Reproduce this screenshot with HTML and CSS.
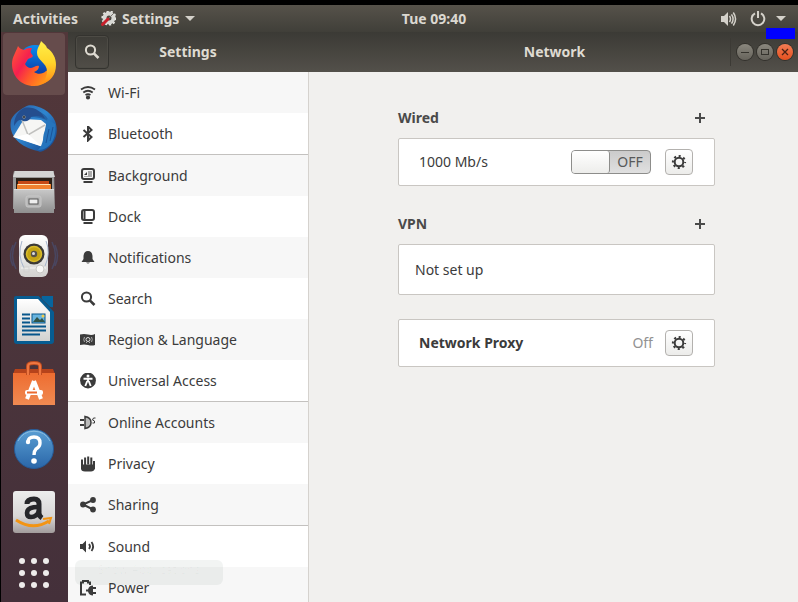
FILE: index.html
```html
<!DOCTYPE html>
<html lang="en">
<head>
<meta charset="utf-8">
<title>Settings</title>
<link rel="stylesheet" href="styles.css">
</head>
<body>
<svg class="defs" aria-hidden="true">
  <defs>
    <linearGradient id="fox" x1="0" y1="0.2" x2="1" y2="0.8"><stop offset="0" stop-color="#ff4f3a"/><stop offset=".3" stop-color="#f5204f"/><stop offset=".55" stop-color="#ff5a2a"/><stop offset="1" stop-color="#ffb010"/></linearGradient>
    <linearGradient id="flame" x1="0" y1="0" x2="0" y2="1"><stop offset="0" stop-color="#fff04a"/><stop offset=".5" stop-color="#ffd42a"/><stop offset="1" stop-color="#ff8a16"/></linearGradient>
    <linearGradient id="globe" x1="0" y1="0" x2="0" y2="1"><stop offset="0" stop-color="#0a8cf0"/><stop offset="1" stop-color="#0a2f98"/></linearGradient>
    <linearGradient id="bird" x1="0" y1="0" x2="1" y2="1"><stop offset="0" stop-color="#2a5fa6"/><stop offset=".45" stop-color="#2f86d0"/><stop offset="1" stop-color="#123f86"/></linearGradient>
    <linearGradient id="steel" x1="0" y1="0" x2="0" y2="1"><stop offset="0" stop-color="#c9c9c9"/><stop offset="1" stop-color="#8f8f8f"/></linearGradient>
    <linearGradient id="light" x1="0" y1="0" x2="0" y2="1"><stop offset="0" stop-color="#ffffff"/><stop offset="1" stop-color="#d2d2d0"/></linearGradient>
    <linearGradient id="orange" x1="0" y1="0" x2="0" y2="1"><stop offset="0" stop-color="#ee6d31"/><stop offset="1" stop-color="#f08a52"/></linearGradient>
    <linearGradient id="blue" x1="0" y1="0" x2="0" y2="1"><stop offset="0" stop-color="#5a9fd4"/><stop offset="1" stop-color="#2a66a8"/></linearGradient>
    <linearGradient id="tile" x1="0" y1="0" x2="0" y2="1"><stop offset="0" stop-color="#ededed"/><stop offset=".6" stop-color="#d8d6d6"/><stop offset="1" stop-color="#a29c9c"/></linearGradient>
    <symbol id="gear" viewBox="0 0 16 16"><circle cx="8" cy="8" r="4.300" fill="none" stroke="currentColor" stroke-width="2"/><circle cx="8" cy="8" r="6.100" fill="none" stroke="currentColor" stroke-width="2" stroke-dasharray="2.100 2.691" stroke-dashoffset="1.050"/></symbol>
    <symbol id="lens" viewBox="0 0 16 16"><circle cx="6.500" cy="6" r="4.600" fill="none" stroke="currentColor" stroke-width="2"/><path d="M9.800 9.300l4.700 4.700" stroke="currentColor" stroke-width="2.600"/></symbol>
  </defs>
</svg>

<header class="topbar">
  <button class="top-item">Activities</button>
  <button class="top-item app-menu">
    <svg width="16" height="16" viewBox="0 0 16 16"><circle cx="9" cy="7" r="4.500" fill="none" stroke="#d8d8d4" stroke-width="4"/><circle cx="9" cy="7" r="6.800" fill="none" stroke="#e4e4e0" stroke-width="1.600" stroke-dasharray="2.200 2"/><path d="M9 7l5-5" stroke="#77746e" stroke-width="1"/><path d="M8 8L2.500 13.500" stroke="#c8202c" stroke-width="3" stroke-linecap="round"/></svg>
    Settings
    <span class="caret"></span>
  </button>
  <time class="clock">Tue 09:40</time>
  <button class="top-item status" aria-label="System menu">
    <svg width="18" height="16" viewBox="0 0 18 16"><path d="M1 5h3l4-4v14l-4-4H1z" fill="#d4d1ca"/><path d="M9.500 5q2 3 0 6M11.500 3.300q3.200 4.700 0 9.400M13.300 1.500q4.500 6.500 0 13" fill="none" stroke="#d4d1ca" stroke-width="1.500"/></svg>
    <svg width="16" height="16" viewBox="0 0 16 16"><path d="M5 2.300A6.300 6.300 0 1 0 11 2.300M8 0v7" fill="none" stroke="#d4d1ca" stroke-width="2"/></svg>
    <span class="caret"></span>
  </button>
  <span class="marker"></span>
</header>

<div class="desktop">
  <nav class="dock" aria-label="Dock">
    <button class="launcher active" aria-label="Firefox">
      <svg width="48" height="48" viewBox="0 0 48 48"><circle cx="25" cy="22" r="17" fill="url(#globe)"/><path d="M8 6c1 2 3 3 6 4 3-2 5-2 8-2-1 2-2 4-1 5l2 3c-1 2-4 2-5 3-1 2-2 3-3 5 1 2 3 4 6 4 3 0 5-3 8-2 0 3-2 5-5 6 4 3 9 2 12-1l9-5C44 38 35 46 24 46 11 46 2 36 2 24 2 17 6 12 8 6z" fill="url(#fox)"/><path d="M31 1c3 3 5 4 6 7 6 4 9 10 9 17 0 10-6 17-14 19 3-4 5-8 5-13 0-8-10-11-10-18 0-5 3-8 4-12z" fill="url(#flame)"/></svg>
    </button>
    <button class="launcher" aria-label="Thunderbird">
      <svg width="50" height="50" viewBox="0 0 50 50"><path d="M16 4C22-1 41 6 46 18c5 13-1 25-12 30-2 1-4 1-5 0C9 44-1 31 2 17c2-5 7-9 12-12z" fill="url(#bird)"/><path d="M9 15c6-2 24-2 31 4-2-9-14-13-21-12z" fill="#2464a8"/><path d="M15 16l17 1 5 4-3 23L4 34z" fill="#f6f6f4"/><path d="M13 17l6 15 17-10" fill="none" stroke="#c0c0be" stroke-width="1.500"/><path d="M5 34l14-3 13 12" fill="#fff"/><path d="M15 5C9 8 5 14 5 23c3-5 6-8 9-5 4 1 7-1 8-4 5-2 10-1 14 2-3-8-12-13-21-11z" fill="#244e8e"/><path d="M38 16c0 9-4 13-4 21-1 4-2 7-5 10 13 0 19-13 17-26-2-1-5-4-8-5z" fill="#2675bd"/><path d="M40 26l-3 14M44 24l-3 14" stroke="#1b549a"/><circle cx="15" cy="14" r="1.500" fill="#c8b890"/><circle cx="15" cy="14" r="1" fill="#18233a"/></svg>
    </button>
    <button class="launcher" aria-label="Files">
      <svg width="44" height="44" viewBox="0 0 44 44"><path d="M2 1h40l1 38H1V5z" fill="#9a9a9a"/><path d="M3 1h38l2 6H1z" fill="#d4d4d4"/><path d="M4 8h36v12H4z" fill="#2b2018"/><path d="M6 11h31v8H6z" fill="#c64a16"/><path d="M5 14h34v6H5z" fill="#f1822f"/><path d="M6 14.500h32" stroke="#ffe6b8"/><path d="M2 19h40v24H2z" fill="url(#steel)"/><path d="M2 19.500h40" stroke="#dedede"/><rect x="14" y="26" width="15" height="11" rx="2" fill="#b8b8b8" stroke="#c8c8c8"/><rect x="17" y="29" width="9" height="5" fill="#eee" stroke="#555"/></svg>
    </button>
    <button class="launcher" aria-label="Rhythmbox">
      <svg width="50" height="44" viewBox="0 0 50 44"><path d="M7 8q-7 14 0 27M4 11q-5 11 0 21M43 8q7 14 0 27M46 11q5 11 0 21" fill="none" stroke="#47527a" stroke-opacity=".6" stroke-width="1.500"/><rect x="10" y="1" width="29" height="42" rx="6" fill="url(#light)"/><path d="M12 34h25" stroke="#f6f6f4"/><circle cx="25" cy="20" r="10.500" fill="#3c3a36"/><circle cx="25" cy="20" r="7.500" fill="#c4a414" stroke="#d9bc2b" stroke-width="1.500"/><circle cx="25" cy="20" r="3.200" fill="#55514a"/><circle cx="24.500" cy="19.500" r="1.500" fill="#ddd"/><path d="M13 7q-5 14 2 27M37 7q5 12-1 25" fill="none" stroke="#a6b5cd"/><circle cx="31" cy="35" r="4" fill="#f8f8f6" stroke="#c8c8c5"/><rect x="15" y="33" width="5" height="5" fill="none" stroke="#d2d2d0"/></svg>
    </button>
    <button class="launcher" aria-label="LibreOffice Writer">
      <svg width="42" height="50" viewBox="0 0 42 50"><path d="M3 1h23l15 16v29q0 3-3 3H4q-3 0-3-3V3q0-2 2-2z" fill="#075c91"/><path d="M4 4h21l12 13v29H4z" fill="url(#light)"/><path d="M27 0l15 15" stroke="#4c353b" stroke-width="3"/><path d="M29 1h11v11q-3 1-5-2l-6-6q-1-2 0-3z" fill="#07659e"/><path d="M9 19.500h8M9 23.500h8M9 27.500h8M9 31.500h24M9 35.500h24M9 39.500h18" stroke="#07568b" stroke-width="2"/><rect x="19" y="19" width="13" height="9" fill="#68b4df" stroke="#07568b"/><path d="M20 27l4-5 3 3 2-2 3 4z" fill="#315347"/><circle cx="30" cy="21" r="1.500" fill="#f1cb4b"/></svg>
    </button>
    <button class="launcher" aria-label="Ubuntu Software">
      <svg width="44" height="46" viewBox="0 0 44 46"><path d="M3 8h38l2 5H1z" fill="#b6431b"/><path d="M1 12h42v32H1z" fill="url(#orange)"/><path d="M16 14V5q0-3 6-3t6 3v9" fill="none" stroke="#c04d20" stroke-width="4"/><path d="M16 14V5q0-3 6-3t6 3v9" fill="none" stroke="#ef7842" stroke-width="2"/><path d="M22 20l-7 18M22 20l7 18" stroke="#fff" stroke-width="4"/><rect x="13" y="29" width="18" height="5" rx="2" fill="#fff"/><path d="M15 31.500h10" stroke="#eb6a30" stroke-width="2"/></svg>
    </button>
    <button class="launcher" aria-label="Help">
      <svg width="42" height="42" viewBox="0 0 42 42"><circle cx="21" cy="22" r="19.500" fill="url(#blue)" stroke="#255b99"/><path d="M5 14a18 18 0 0 1 32 0" fill="none" stroke="#8abce1"/><path d="M15 15q0-5 6-5t6 6q0 4-4 6-2 2-2 6" fill="none" stroke="#fff" stroke-width="3.400"/><circle cx="15" cy="15" r="2.200" fill="#fff"/><circle cx="21" cy="34" r="2.800" fill="#fff"/></svg>
    </button>
    <button class="launcher" aria-label="Amazon">
      <svg width="44" height="44" viewBox="0 0 44 44"><rect x="1" y="1" width="42" height="42" rx="3" fill="url(#tile)"/><path d="M15 14q0-5 7-5 5 0 5 5v9q0 3 3 5" fill="none" stroke="#26262a" stroke-width="5"/><path d="M26 17q-11 0-11 6 0 4 4 4 6 0 8-6" fill="none" stroke="#26262a" stroke-width="4.600"/><path d="M4 30q17 11 33 1" fill="none" stroke="#f39413" stroke-width="3"/><path d="M31 29l8-1-2 6" fill="none" stroke="#f39413" stroke-width="2"/></svg>
    </button>
    <button class="launcher" aria-label="Show Applications">
      <svg width="32" height="38" viewBox="0 0 32 38" fill="#eeeceb"><circle cx="4" cy="4" r="3"/><circle cx="16" cy="4" r="3"/><circle cx="28" cy="4" r="3"/><circle cx="4" cy="16" r="3"/><circle cx="16" cy="16" r="3"/><circle cx="28" cy="16" r="3"/><circle cx="4" cy="28" r="3"/><circle cx="16" cy="28" r="3"/><circle cx="28" cy="28" r="3"/></svg>
    </button>
    <span class="tooltip">Show Applications</span>
  </nav>

  <section class="window">
    <header class="titlebar">
      <div class="title-side">
        <button class="search" aria-label="Search"><svg width="16" height="16"><use href="#lens"/></svg></button>
        <h1>Settings</h1>
      </div>
      <div class="title-main">
        <h2>Network</h2>
        <div class="controls">
          <button aria-label="Minimize"><svg width="16" height="16" viewBox="0 0 16 16"><path d="M4 8.500h8" stroke="#35332d"/></svg></button>
          <button aria-label="Maximize"><svg width="16" height="16" viewBox="0 0 16 16"><rect x="4.500" y="5.500" width="7" height="5" fill="none" stroke="#35332d"/></svg></button>
          <button class="close" aria-label="Close"><svg width="16" height="16" viewBox="0 0 16 16"><path d="M5 5l6 6M11 5l-6 6" stroke="#4b2214" stroke-width="1.300"/></svg></button>
        </div>
      </div>
    </header>
    <div class="content">
      <nav class="sidebar" aria-label="Settings">
        <ul>
          <li class="shade"><a href="#"><svg width="16" height="16" viewBox="0 0 16 16" fill="none" stroke="currentColor" stroke-width="1.800"><path d="M1 4.500q7-5 14 0M3.300 7.500q4.700-3.500 9.400 0M5.500 10q2.500-1.500 5 0"/><circle cx="8" cy="12.500" r="1.200" fill="currentColor"/></svg>Wi-Fi</a></li>
          <li><a href="#"><svg width="16" height="16" viewBox="0 0 16 16"><path d="M3.500 4l8 7L8 14.500v-14L11.500 4l-8 7" fill="none" stroke="currentColor" stroke-width="2"/></svg>Bluetooth</a></li>
        </ul>
        <ul>
          <li class="shade"><a href="#"><svg width="16" height="16" viewBox="0 0 16 16"><rect x="2" y="1" width="12" height="10" rx="2" fill="none" stroke="currentColor" stroke-width="2"/><path d="M8 3h4v6H4V8h4z" fill="#aaa"/><path d="M7 4v3H4z" fill="currentColor"/><path d="M3.500 14h9" stroke="currentColor" stroke-width="2"/></svg>Background</a></li>
          <li><a href="#"><svg width="16" height="16" viewBox="0 0 16 16"><rect x="2" y="1" width="12" height="10" rx="2" fill="none" stroke="currentColor" stroke-width="2"/><path d="M4.500 2v8M3.500 14h9" stroke="currentColor" stroke-width="2"/></svg>Dock</a></li>
          <li class="shade"><a href="#"><svg width="16" height="16" viewBox="0 0 16 16" fill="currentColor"><path d="M8 1q4 0 4.500 5v3l2 3h-13l2-3V6Q4 1 8 1zM6 12.500h4q-2 2-4 0"/></svg>Notifications</a></li>
          <li><a href="#"><svg width="16" height="16"><use href="#lens"/></svg>Search</a></li>
          <li class="shade"><a href="#"><svg width="16" height="16" viewBox="0 0 16 16"><path d="M0 2.500q4-1 8 0t7-.5v11q-3 1-7 0t-8 0z" fill="currentColor"/><circle cx="8" cy="7.500" r="2" fill="none" stroke="#ddd"/><path d="M4.500 5q-1.500 2.500 0 5M11.500 5q1.500 2.500 0 5M6 11l1-1M10 11l-1-1" fill="none" stroke="#aaa"/></svg>Region &amp; Language</a></li>
          <li><a href="#"><svg width="16" height="16" viewBox="0 0 16 16"><circle cx="8" cy="7.500" r="7.900" fill="currentColor"/><circle cx="8" cy="3" r="1.500" fill="#fff"/><path d="M3.500 5.800h9M8 5v4M7.300 8L5.300 13M8.700 8l2 5" stroke="#fff" stroke-width="1.900"/></svg>Universal Access</a></li>
        </ul>
        <ul>
          <li class="shade"><a href="#"><svg width="16" height="16" viewBox="0 0 16 16" fill="none" stroke="currentColor"><path d="M0 5h4M0 10h4" stroke-width="2"/><path d="M5 1.500v12q6-1 6-6t-6-6z" fill="#bbb" stroke-width="1.500"/><path d="M15.500 3h-2l-1 2 2 1v2h-2"/></svg>Online Accounts</a></li>
          <li><a href="#"><svg width="16" height="16" viewBox="0 0 16 16"><path d="M2 3.500v7M5.100 1.500v8M8.200.500v8M11.300 1.500v8M14 5v5" stroke="currentColor" stroke-width="2"/><path d="M1 8.500h14v4q-1 3-4 3H5q-4 0-4-3z" fill="currentColor"/></svg>Privacy</a></li>
          <li class="shade"><a href="#"><svg width="16" height="16" viewBox="0 0 16 16" fill="currentColor"><circle cx="3" cy="7.500" r="2.900"/><circle cx="13" cy="3" r="2.900"/><circle cx="13" cy="12.500" r="2.900"/><path d="M13 3L3 7.500l10 5" fill="none" stroke="currentColor" stroke-width="2"/></svg>Sharing</a></li>
        </ul>
        <ul>
          <li><a href="#"><svg width="16" height="16" viewBox="0 0 16 16"><path d="M0 5h2.500L6 1.500v12L2.500 10H0z" fill="currentColor"/><path d="M9 5q2 2.500 0 5M11.500 3q3.200 4.500 0 9" fill="none" stroke="currentColor" stroke-width="1.800"/></svg>Sound</a></li>
          <li class="shade"><a href="#"><svg width="16" height="16" viewBox="0 0 16 16"><path d="M6 14.500H1v-12h2V1h5v1.500h2V5" fill="none" stroke="currentColor" stroke-width="2"/><path d="M13 5.500v10q-4 0-5-4H6v-2h2q1-4 5-4zM12 7h4v2h-4zM12 12h4v2h-4z" fill="currentColor"/></svg>Power</a></li>
        </ul>
      </nav>
      <main class="panel">
        <div class="heading"><h3>Wired</h3><button aria-label="Add wired connection"><svg width="10" height="10" viewBox="0 0 10 10"><path d="M5 0v10M0 5h10" stroke="currentColor" stroke-width="2"/></svg></button></div>
        <div class="card">
          <label for="wired">1000 Mb/s</label>
          <span class="switch"><input id="wired" type="checkbox" role="switch"><span class="knob"></span><span class="state">OFF</span></span>
          <button class="options" aria-label="Wired options"><svg width="16" height="16"><use href="#gear"/></svg></button>
        </div>
        <div class="heading next"><h3>VPN</h3><button aria-label="Add VPN"><svg width="10" height="10" viewBox="0 0 10 10"><path d="M5 0v10M0 5h10" stroke="currentColor" stroke-width="2"/></svg></button></div>
        <div class="card empty">Not set up</div>
        <div class="card proxy">
          <h3>Network Proxy</h3>
          <span class="off">Off</span>
          <button class="options" aria-label="Proxy options"><svg width="16" height="16"><use href="#gear"/></svg></button>
        </div>
      </main>
    </div>
  </section>
</div>
</body>
</html>
```
FILE: styles.css
```css
* { box-sizing: border-box; }
body {
  margin: 0;
  height: 100vh;
  overflow: hidden;
  display: flex;
  flex-direction: column;
  padding: 5px 0 0 1px;
  background: #000;
  color: #3b3b3b;
  font: 14px/20px "Noto Sans", "Open Sans", sans-serif;
}
button { padding: 0; border: 0; background: none; color: inherit; font: inherit; }
h1, h2, h3 { margin: 0; font-size: 14px; font-weight: 700; }
ul { margin: 0; padding: 0; list-style: none; }
svg { display: block; flex: none; }
.defs { position: absolute; width: 0; height: 0; }

.topbar {
  flex: none;
  position: relative;
  display: grid;
  grid-template-columns: auto 1fr auto 1fr;
  align-items: center;
  height: 27px;
  padding: 0 12px;
  background: linear-gradient(#56524a, #403f39);
  color: #dbd8d1;
  font-weight: 700;
}
.top-item { display: flex; align-items: center; }
.app-menu { gap: 6px; padding-left: 22px; }
.clock { padding-left: 4px; }
.status { justify-self: end; gap: 10px; }
.status svg:first-child { margin-right: 2px; }
.caret { border: 5px solid transparent; border-top-color: #d4d1ca; border-bottom: 0; }
.marker { position: absolute; z-index: 2; top: 23px; right: 3px; width: 29px; height: 11px; background: #00f; }

.desktop { flex: 1; min-height: 0; display: flex; }
.dock {
  flex: none;
  position: relative;
  display: flex;
  flex-direction: column;
  gap: 2px;
  width: 67px;
  padding: 1px 3px 0 2px;
  background: linear-gradient(#52373a, #4a343b 60%, #44303a);
}
.launcher { flex: none; display: grid; place-items: center; height: 62px; border-radius: 4px; }
.launcher.active { background: #664c4c; }
.tooltip {
  position: absolute;
  z-index: 3;
  left: 74px;
  top: 528px;
  width: 148px;
  height: 25px;
  border-radius: 6px;
  background: rgba(40, 60, 50, 0.06);
  color: rgba(40, 60, 50, 0.03);
  font-size: 12px;
  line-height: 20px;
  text-align: center;
}

.window { flex: 1; min-width: 0; display: flex; flex-direction: column; }
.titlebar {
  flex: none;
  display: flex;
  height: 40px;
  background: linear-gradient(#3b3a35, #53504a);
  color: #dfdbd2;
}
.title-side { display: grid; grid-template-columns: 34px 1fr 34px; align-items: center; width: 241px; padding: 0 8px 0 7px; }
.title-side h1, .title-main h2 { text-align: center; }
.search { display: grid; place-items: center; height: 34px; border: 1px solid #34332f; border-radius: 4px; box-shadow: inset 0 0 0 1px #4d4b45; }
.title-main { flex: 1; display: grid; grid-template-columns: 70px 1fr 68px; align-items: center; }
.title-main h2 { grid-column: 2; }
.controls { display: flex; align-items: center; gap: 4px; height: 28px; padding-left: 6px; border-left: 1px solid #3c3a35; }
.controls button { width: 16px; height: 16px; border-radius: 50%; background: linear-gradient(#8a877e, #66635b); box-shadow: 0 0 0 1px #33312c; }
.controls .close { background: linear-gradient(#f27c54, #e5501f); }

.content { flex: 1; min-height: 0; display: flex; }
.sidebar { flex: none; width: 241px; overflow: hidden; background: #fff; border-right: 1px solid #d5d2ce; }
.sidebar ul + ul { border-top: 1px solid #c3c1bf; }
.sidebar a { display: flex; align-items: center; gap: 12px; height: 41px; padding: 0 12px; color: #3b3b3b; text-decoration: none; }
.shade { background: #f7f7f7; }

.panel { flex: 1; min-width: 0; padding: 26px 83px 0 89px; background: #f1f0ee; }
.heading { display: flex; align-items: center; justify-content: space-between; height: 40px; padding-right: 10px; color: #4a4a4a; }
.heading.next { margin-top: 18px; }
.card { display: flex; align-items: center; height: 48px; padding: 0 21px 0 20px; border: 1px solid #c9c6c2; border-radius: 2px; background: #fff; }
.card label, .card h3 { flex: 1; }
.card.empty { height: 51px; padding-left: 16px; }
.card.proxy { margin-top: 24px; }
.off { margin-right: 12px; color: #929292; }
.switch {
  position: relative;
  display: flex;
  width: 80px;
  height: 24px;
  margin-right: 14px;
  border: 1px solid #8d8d8b;
  border-radius: 4px;
  background: linear-gradient(#cbcbcb, #e0e0e0);
}
.switch input { position: absolute; inset: 0; width: 100%; height: 100%; margin: 0; opacity: 0; }
.knob { width: 38px; border-right: 1px solid #8d8d8b; border-radius: 3px; background: linear-gradient(#fff, #ededeb); }
.state { flex: 1; color: #57595a; line-height: 22px; text-align: center; }
.options { display: grid; place-items: center; width: 28px; height: 26px; border: 1px solid #b3b1ae; border-radius: 4px; background: linear-gradient(#fff, #ececea); }
```
